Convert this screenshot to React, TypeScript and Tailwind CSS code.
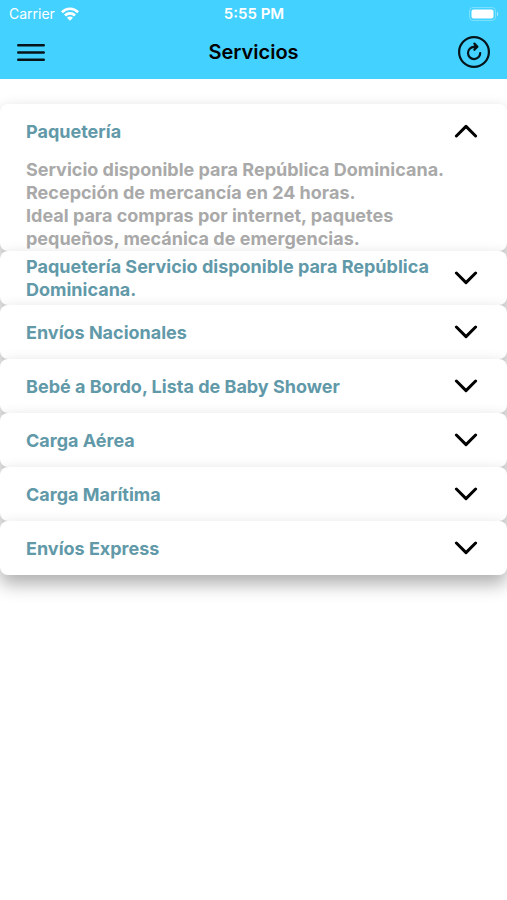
import React, { useState } from 'react';

interface Service {
    id: string;
    title: string;
    lines: string[];
}

const services: Service[] = [
    {
        id: 'paqueteria',
        title: 'Paquetería',
        lines: [
            'Servicio disponible para República Dominicana.',
            'Recepción de mercancía en 24 horas.',
            'Ideal para compras por internet, paquetes pequeños, mecánica de emergencias.',
        ],
    },
    { id: 'paqueteria-rd', title: 'Paquetería Servicio disponible para República Dominicana.', lines: [] },
    { id: 'nacionales', title: 'Envíos Nacionales', lines: [] },
    { id: 'baby', title: 'Bebé a Bordo, Lista de Baby Shower', lines: [] },
    { id: 'aerea', title: 'Carga Aérea', lines: [] },
    { id: 'maritima', title: 'Carga Marítima', lines: [] },
    { id: 'express', title: 'Envíos Express', lines: [] },
];

const WifiIcon = () => (
    <svg width="18" height="14" viewBox="0 0 18 14" fill="none" stroke="currentColor" strokeWidth="2.7" aria-hidden="true">
        <path d="M0.9 5.2C5.4 0.6 12.6 0.6 17.1 5.2" />
        <path d="M4 8.5C6.8 5.7 11.2 5.7 14 8.5" />
        <path d="M9 13.8L6 10.8C7.7 9.2 10.3 9.2 12 10.8Z" fill="currentColor" stroke="none" />
    </svg>
);

const BatteryIcon = () => (
    <svg width="30" height="14" viewBox="0 0 30 14" aria-hidden="true">
        <rect x="0.5" y="0.5" width="26" height="13" rx="3.5" fill="none" stroke="#fff" strokeOpacity="0.3" />
        <rect x="2.5" y="2.5" width="22" height="9" rx="2" fill="#fff" />
        <path d="M28 4.5C29.6 5.2 29.6 8.8 28 9.5Z" fill="#fff" fillOpacity="0.5" />
    </svg>
);

const MenuIcon = () => (
    <svg width="28" height="18" viewBox="0 0 28 18" stroke="currentColor" strokeWidth="2.6" strokeLinecap="round" aria-hidden="true">
        <path d="M1.3 2.3H26.7M1.3 9.5H26.7M1.3 16.7H26.7" />
    </svg>
);

const RefreshIcon = () => (
    <svg width="32" height="32" viewBox="0 0 32 32" fill="none" stroke="currentColor" strokeWidth="2.2" strokeLinecap="round" strokeLinejoin="round" aria-hidden="true">
        <circle cx="16" cy="16" r="14.9" />
        <path d="M18.4 10.9H16A6.1 6.1 0 1 0 22.2 17" />
        <path d="M16.4 7.6L19.4 10.8L16.4 13.8" />
        <path d="M16.6 8.2L19 10.8L16.6 13Z" fill="currentColor" strokeWidth="1" />
    </svg>
);

const Chevron = ({ open }: { open: boolean }) => (
    <svg width="24" height="14" viewBox="0 0 24 14" fill="none" stroke="currentColor" strokeWidth="3" strokeLinecap="round" strokeLinejoin="round" className="shrink-0" aria-hidden="true">
        <path d={open ? 'M2.4 12L12 2.4L21.6 12' : 'M2.4 2L12 11.6L21.6 2'} />
    </svg>
);

const App: React.FC = () => {
    const [openId, setOpenId] = useState<string | null>('paqueteria');

    return (
        <div className="min-h-screen bg-white font-['Inter',sans-serif]">
            <header className="bg-[#43d1ff]">
                <div className="grid grid-cols-3 items-center h-7 pl-[9px] pr-2 text-white">
                    <div className="flex items-center gap-1.5 text-[14px] leading-5">
                        Carrier
                        <WifiIcon />
                    </div>
                    <div className="text-center text-[15px] leading-5 font-semibold">5:55 PM</div>
                    <div className="flex justify-end">
                        <BatteryIcon />
                    </div>
                </div>
                <div className="grid grid-cols-3 items-center h-[51px] px-[17px] pb-[3px] text-[#06141a]">
                    <button type="button" aria-label="Menú" className="justify-self-start">
                        <MenuIcon />
                    </button>
                    <h1 className="text-center text-[20px] leading-6 font-semibold text-black">Servicios</h1>
                    <button type="button" aria-label="Actualizar" className="justify-self-end">
                        <RefreshIcon />
                    </button>
                </div>
            </header>

            <main className="pt-[25px]">
                {services.map((service) => {
                    const open = openId === service.id;
                    return (
                        <section key={service.id} className="relative rounded-lg bg-white shadow-[0_9px_18px_rgba(0,0,0,0.32)]">
                            <h2>
                                <button
                                    type="button"
                                    aria-expanded={open}
                                    onClick={() => setOpenId(open ? null : service.id)}
                                    className="flex w-full items-center justify-between gap-4 min-h-[54px] pl-[26px] pr-[29px] py-1 text-left text-[18px] leading-[23px] font-bold text-[#6199a9]"
                                >
                                    {service.title}
                                    <span className="text-black">
                                        <Chevron open={open} />
                                    </span>
                                </button>
                            </h2>
                            {open && service.lines.length > 0 && (
                                <div className="pl-[26px] pr-[55px] pb-px text-[18px] leading-[23px] font-bold text-[#a9a9a9]">
                                    {service.lines.map((line) => (
                                        <p key={line}>{line}</p>
                                    ))}
                                </div>
                            )}
                        </section>
                    );
                })}
            </main>
        </div>
    );
};

export default App;
